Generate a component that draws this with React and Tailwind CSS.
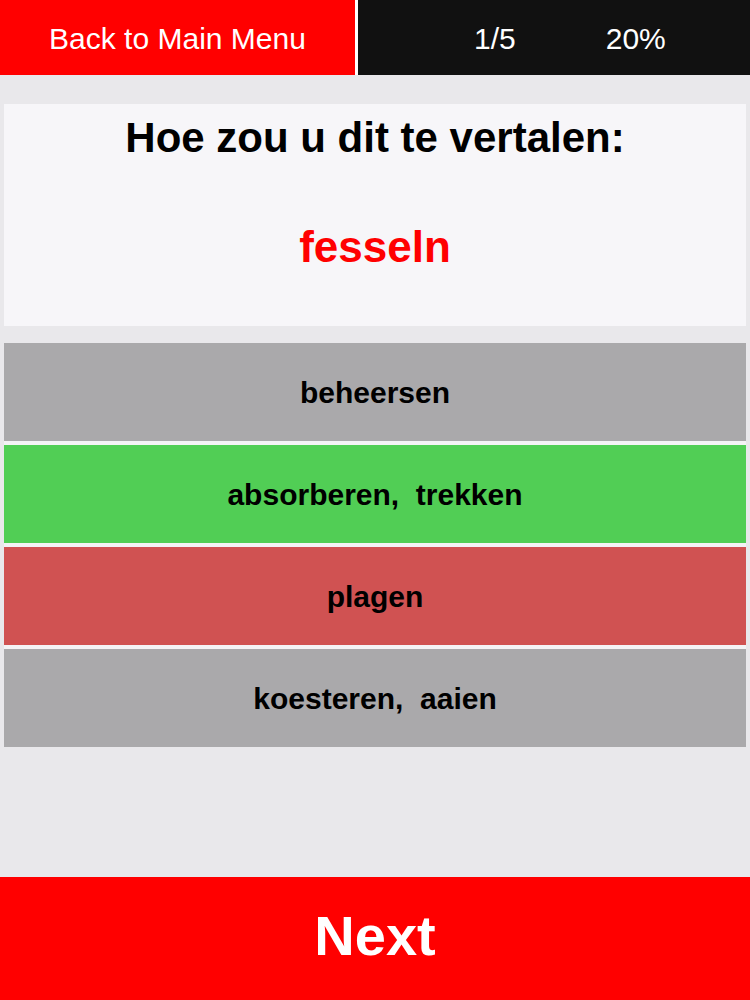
export default function App() {
  const options = [
    { label: 'beheersen', color: 'bg-[#aaa9ab]' },
    { label: 'absorberen,  trekken', color: 'bg-[#51ce55]' },
    { label: 'plagen', color: 'bg-[#d05252]' },
    { label: 'koesteren,  aaien', color: 'bg-[#aaa9ab]' },
  ];

  return (
    <div className="w-[750px] h-[1000px] bg-[#e9e8eb] flex flex-col font-['Liberation_Sans',Arial,sans-serif]">
      {/* Header */}
      <div className="h-[75px] flex bg-white">
        <button className="w-[355px] h-full bg-[#ff0000] text-white text-[30px] leading-none flex items-center justify-center pt-[2px]">
          Back to Main Menu
        </button>
        <div className="ml-[3px] flex-1 h-full bg-[#111111] text-white text-[30px] leading-none flex items-center pl-[116px] gap-[90px] pt-[2px]">
          <span>1/5</span>
          <span>20%</span>
        </div>
      </div>

      {/* Question */}
      <div className="mt-[29px] mx-[4px] h-[222px] bg-[#f7f6f9] flex flex-col items-center pt-[13px]">
        <h1 className="text-[42px] leading-[42px] font-bold text-black">Hoe zou u dit te vertalen:</h1>
        <p className="mt-[66px] text-[44px] leading-[44px] font-bold text-[#ff0000]">fesseln</p>
      </div>

      {/* Answers */}
      <div className="mt-[17px] mx-[4px] flex flex-col gap-[4px] bg-[#f4f3f5]">
        {options.map((opt) => (
          <button
            key={opt.label}
            className={`h-[98px] ${opt.color} flex items-center justify-center text-[30px] font-bold text-black whitespace-pre`}
          >
            {opt.label}
          </button>
        ))}
      </div>

      {/* Footer */}
      <div className="mt-auto h-[123px] bg-[#ff0000] flex items-center justify-center pb-[6px]">
        <span className="text-white text-[56px] font-bold leading-none">Next</span>
      </div>
    </div>
  );
}
